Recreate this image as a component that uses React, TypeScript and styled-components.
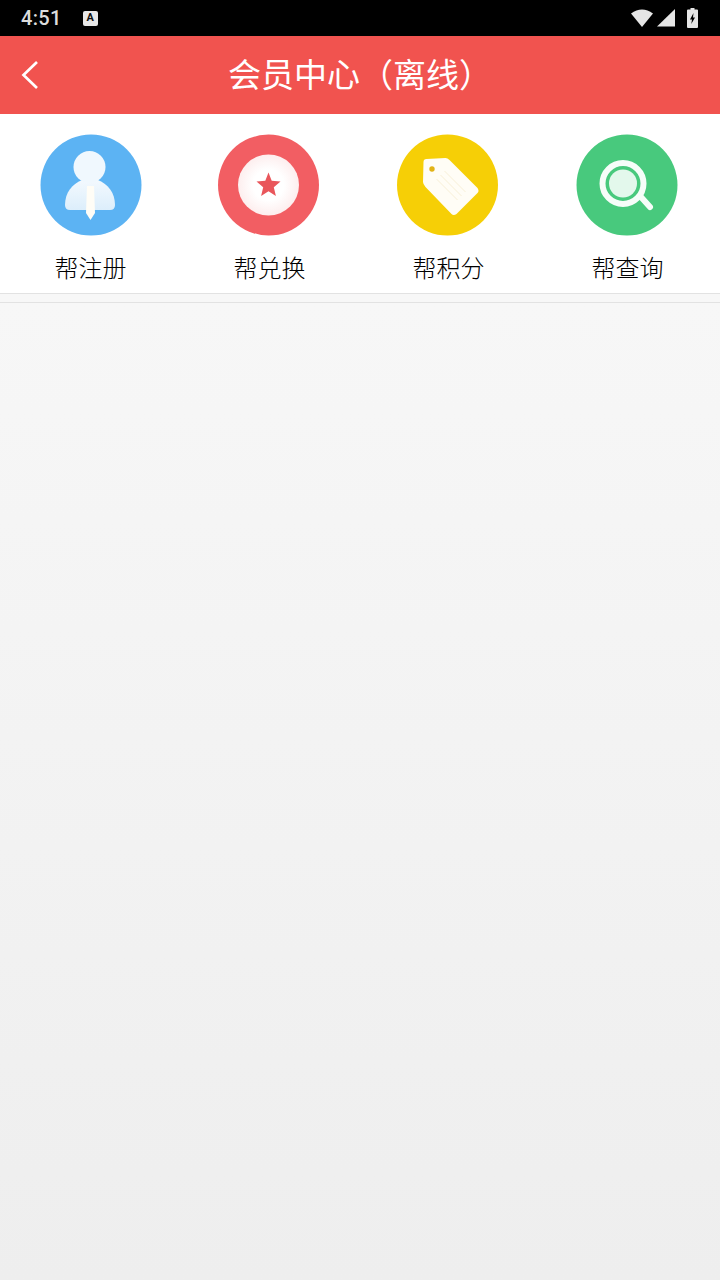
import React from 'react';
import styled, { createGlobalStyle } from 'styled-components';

const GlobalStyle = createGlobalStyle`
html, body {
  margin: 0;
  padding: 0;
  background: #f7f7f7;
}
`;

const UserIcon = () => (
    <Glyph viewBox="0 0 102 102">
        <defs>
            <linearGradient id="bodyFill" x1="0" y1="0" x2="0" y2="1">
                <stop offset="0" stopColor="#f3f9fe" />
                <stop offset="1" stopColor="#dceefb" />
            </linearGradient>
        </defs>
        <circle cx="51" cy="51" r="50.5" fill="#5cb3f3" />
        <path d="M25 71C25 59 32 50 42 46L58 46C68 50 75 59 75 71Q75 76 70 76L30 76Q25 76 25 71Z" fill="url(#bodyFill)" />
        <circle cx="49.500" cy="33" r="16" fill="#f0f8fe" />
        <path d="M47 52L54 52L55 79L50.500 86L46 79Z" fill="#fffdf6" />
    </Glyph>
);

const StarIcon = () => (
    <Glyph viewBox="1.500 0 102 102">
        <defs>
            <radialGradient id="discFill">
                <stop offset="0.5" stopColor="#ffffff" />
                <stop offset="1" stopColor="#fdeeee" />
            </radialGradient>
        </defs>
        <circle cx="51" cy="51" r="50.5" fill="#f25e63" />
        <circle cx="51" cy="51" r="30.5" fill="url(#discFill)" />
        <path d="M51 38.500L54.200 46.800L63 47.500L56.300 53.200L58.400 62L51 57.300L43.600 62L45.700 53.200L39 47.500L47.800 46.800Z" fill="#e9565b" />
    </Glyph>
);

const TagIcon = () => (
    <Glyph viewBox="1.500 0 102 102">
        <circle cx="51" cy="51" r="50.5" fill="#f6cf06" />
        <path d="M27 28Q27 25 30 25L49 24Q51 24 53 26L81 54Q83 57 81 59L60 80Q57 82 55 80L29 53Q26.500 50 26.500 48Z" fill="#fffdf6" />
        <path d="M48 37L69 58M44 41L65 62M40 45L61 66" stroke="#f8f0d8" strokeWidth="1" />
        <circle cx="35.500" cy="35" r="2.700" fill="#e2b316" />
    </Glyph>
);

const SearchIcon = () => (
    <Glyph viewBox="1 0 102 102">
        <circle cx="51" cy="51" r="50.5" fill="#48c97d" />
        <circle cx="47" cy="49.500" r="20.500" fill="none" stroke="#f6fdf9" strokeWidth="6" />
        <circle cx="47" cy="49.500" r="14" fill="#e3f8ec" />
        <path d="M65 63L74 73" stroke="#f6fdf9" strokeWidth="6" strokeLinecap="round" />
    </Glyph>
);

const items = [
    { label: '帮注册', icon: <UserIcon /> },
    { label: '帮兑换', icon: <StarIcon /> },
    { label: '帮积分', icon: <TagIcon /> },
    { label: '帮查询', icon: <SearchIcon /> },
];

const App = () => {
    return (
        <Page>
            <GlobalStyle />
            <StatusBar>
                <StatusLeft>
                    <Clock>4:51</Clock>
                    <KeyboardBadge>A</KeyboardBadge>
                </StatusLeft>
                <StatusRight>
                    <svg width="22" height="18" viewBox="0 0 22 18">
                        <path d="M0 4.500Q11 -3.500 22 4.500L11 18Z" fill="#e6e6e6" />
                    </svg>
                    <svg width="18" height="18" viewBox="0 0 18 18">
                        <path d="M18 0V17.500H0Z" fill="#e6e6e6" />
                    </svg>
                    <BatterySlot width="11" height="20" viewBox="0 0 11 20">
                        <path fillRule="evenodd" d="M3.500 0H7.500V1.500H10Q11 1.500 11 2.500V19Q11 20 10 20H1Q0 20 0 19V2.500Q0 1.500 1 1.500H3.500ZM6.500 5L3 11.500H5L4.300 16L8 9.500H6Z" fill="#e6e6e6" />
                    </BatterySlot>
                </StatusRight>
            </StatusBar>
            <Header>
                <BackButton width="18" height="30" viewBox="0 0 18 30">
                    <path d="M16 2L2.500 15L16 28" fill="none" stroke="#fff" strokeWidth="2.700" />
                </BackButton>
                <Title>会员中心（离线）</Title>
            </Header>
            <Menu>
                {items.map(item => (
                    <MenuItem key={item.label}>
                        {item.icon}
                        <MenuLabel>{item.label}</MenuLabel>
                    </MenuItem>
                ))}
            </Menu>
            <Content />
        </Page>
    );
}

const Page = styled.div`
display: flex;
flex-direction: column;
width: 720px;
height: 1280px;
overflow: hidden;
font-family: "Noto Sans CJK SC", "Noto Sans", sans-serif;
`;

const StatusBar = styled.div`
display: flex;
align-items: center;
justify-content: space-between;
flex: none;
height: 36px;
padding: 0 22px 0 21px;
box-sizing: border-box;
background: #000;
`;

const StatusLeft = styled.div`
display: flex;
align-items: center;
gap: 21px;
`;

const Clock = styled.span`
font-family: Roboto, sans-serif;
font-size: 20px;
font-weight: 500;
letter-spacing: 0.3px;
color: #dcdcdc;
`;

const KeyboardBadge = styled.span`
display: block;
width: 15px;
height: 15px;
border-radius: 2px;
background: #e8e8e8;
color: #111;
font-family: Roboto, sans-serif;
font-size: 11px;
font-weight: 700;
line-height: 14px;
text-align: center;
`;

const StatusRight = styled.div`
display: flex;
align-items: center;
gap: 4px;
`;

const BatterySlot = styled.svg`
margin-left: 8px;
`;

const Header = styled.div`
display: flex;
align-items: center;
flex: none;
height: 78px;
padding: 0 0 0 21px;
box-sizing: border-box;
background: #f1534f;
`;

const BackButton = styled.svg`
flex: none;
`;

const Title = styled.div`
margin-left: 189px;
padding-bottom: 4px;
font-size: 33px;
font-weight: 400;
line-height: 74px;
color: #fff;
white-space: nowrap;
`;

const Menu = styled.div`
display: grid;
flex: none;
grid-template-columns: repeat(4, 179px);
height: 180px;
padding-left: 1px;
box-sizing: border-box;
background: #fff;
border-bottom: 1px solid #e2e2e2;
`;

const MenuItem = styled.div`
display: flex;
flex-direction: column;
align-items: center;
padding-top: 20px;
`;

const Glyph = styled.svg`
display: block;
width: 102px;
height: 102px;
overflow: visible;
filter: blur(0.7px);
`;

const MenuLabel = styled.div`
margin-top: 13px;
font-size: 24px;
font-weight: 300;
line-height: 36px;
color: #000;
`;

const Content = styled.div`
flex: 1;
margin-top: 8px;
border-top: 1px solid #e2e2e2;
background: linear-gradient(#f7f7f7, #eeeeee);
`;

export default App;
